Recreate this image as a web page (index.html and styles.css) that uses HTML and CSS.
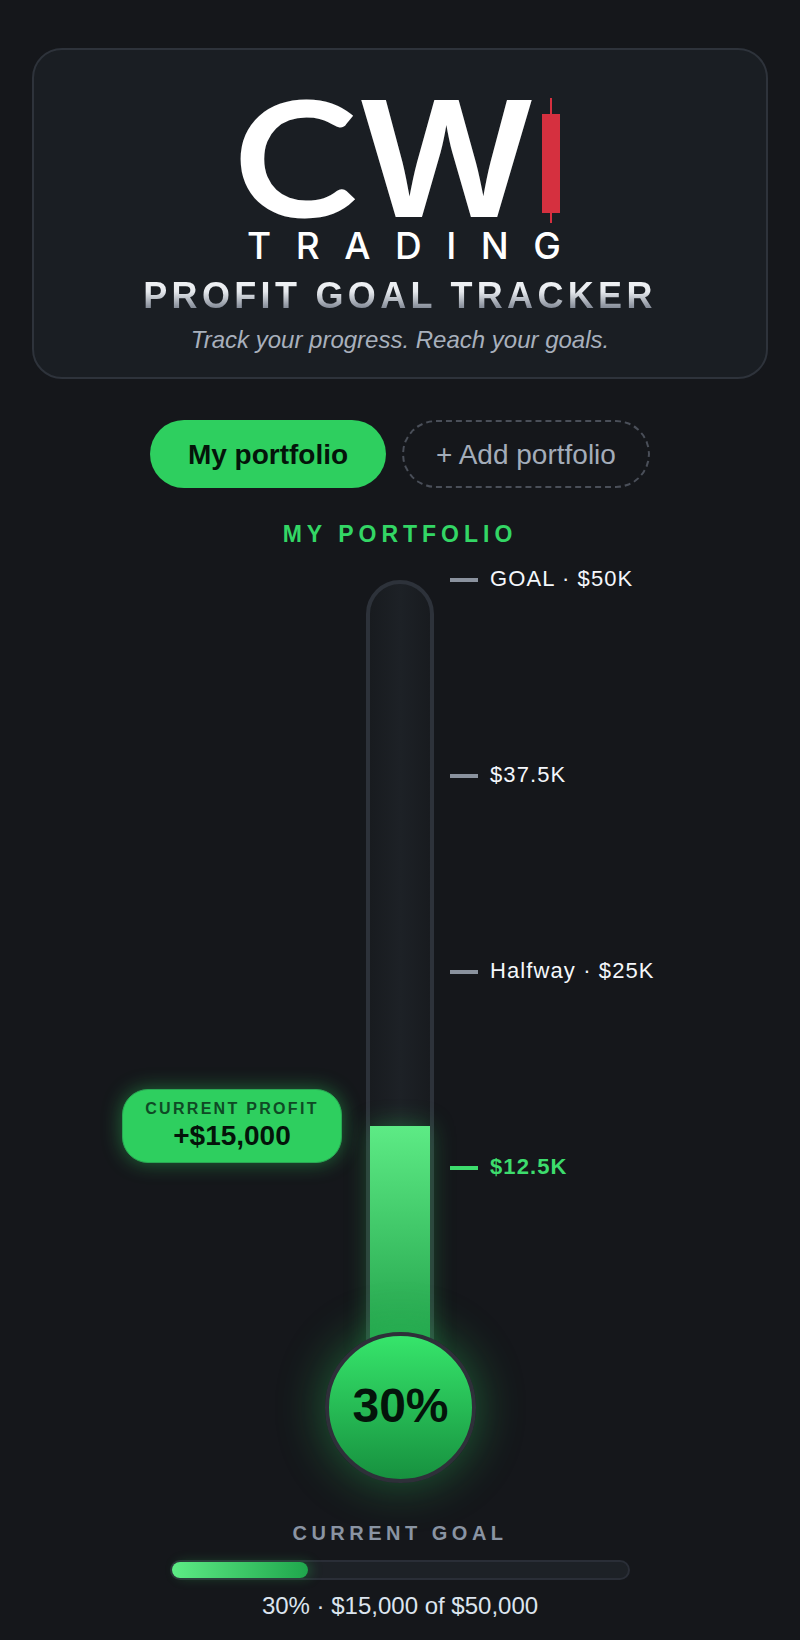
FILE: index.html
```html
<!DOCTYPE html>
<html lang="en">
<head>
<meta charset="utf-8">
<title>Profit Goal Tracker</title>
<link rel="stylesheet" href="styles.css">
</head>
<body>
<main class="page">
  <header class="card">
    <svg class="logo" viewBox="230 98 340 166" width="340" height="166" role="img" aria-label="CW Trading">
      <text class="logo-c" x="235" y="215" textLength="120" lengthAdjust="spacingAndGlyphs">C</text>
      <text class="logo-w" x="357" y="217" textLength="179" lengthAdjust="spacingAndGlyphs">W</text>
      <rect class="candle" x="550" y="98" width="2" height="125"/>
      <rect class="candle" x="542" y="114" width="18" height="99"/>
      <text class="logo-t" x="247" y="259" textLength="314">TRADING</text>
    </svg>
    <h1 class="title">PROFIT GOAL TRACKER</h1>
    <p class="subtitle">Track your progress. Reach your goals.</p>
  </header>

  <nav class="tabs">
    <button class="tab tab-active">My portfolio</button>
    <button class="tab tab-add">+ Add portfolio</button>
  </nav>

  <h2 class="portfolio-name">MY PORTFOLIO</h2>

  <section class="gauge">
    <div class="tube"><div class="tube-fill"></div></div>
    <ul class="scale">
      <li class="mark"><span class="tick"></span><span class="mark-text">GOAL · $50K</span></li>
      <li class="mark"><span class="tick"></span><span class="mark-text">$37.5K</span></li>
      <li class="mark"><span class="tick"></span><span class="mark-text">Halfway · $25K</span></li>
      <li class="mark mark-hit"><span class="tick"></span><span class="mark-text">$12.5K</span></li>
    </ul>
    <div class="pill">
      <div class="pill-label">CURRENT PROFIT</div>
      <div class="pill-value">+$15,000</div>
    </div>
    <div class="bulb">30%</div>
  </section>

  <section class="summary">
    <h3 class="summary-title">CURRENT GOAL</h3>
    <div class="bar"><div class="bar-fill"></div></div>
    <p class="summary-text">30% · $15,000 of $50,000</p>
  </section>
</main>
</body>
</html>
```

FILE: styles.css
```css
* { box-sizing: border-box; }
html, body { margin: 0; padding: 0; }
body {
  background: #15171b;
  font-family: "Liberation Sans", Arial, sans-serif;
  color: #fff;
}
.page { width: 800px; height: 1640px; overflow: hidden; padding-top: 48px; }

.card {
  margin: 0 32px;
  height: 331px;
  padding-top: 48px;
  border: 2px solid #2e333b;
  border-radius: 30px;
  background: #1a1e23;
  display: flex;
  flex-direction: column;
  align-items: center;
}
.logo { display: block; flex: none; overflow: visible; }
.logo-c { font-family: Lato, sans-serif; font-weight: 400; font-size: 155px; fill: #fff; stroke: #fff; stroke-width: 5px; }
.logo-w { font-family: Inter, sans-serif; font-weight: 600; font-size: 161px; fill: #fff; }
.logo-t { font-family: Inter, sans-serif; font-weight: 500; font-size: 37px; fill: #fff; }
.candle { fill: #d5303f; }
.title {
  margin: 10px 0 0;
  font-size: 36px;
  line-height: 44px;
  font-weight: 700;
  letter-spacing: 4.32px;
  background: linear-gradient(180deg, #eef0f3 22%, #e6e9ed 40%, #868d99 76%, #d4d8de 90%);
  -webkit-background-clip: text;
  background-clip: text;
  color: transparent;
}
.subtitle {
  margin: 6px 0 0;
  font-size: 24px;
  line-height: 32px;
  font-style: italic;
  color: #a8b0bc;
}

.tabs { display: flex; justify-content: center; gap: 16px; margin-top: 41px; }
.tab {
  height: 68px;
  border-radius: 34px;
  font-family: inherit;
  font-size: 28px;
  padding: 1px 0 0;
}
.tab-active { width: 236px; border: 0; background: #2ecf5f; color: #04140a; font-weight: 700; }
.tab-add { width: 248px; border: 2px dashed #4a4f59; background: transparent; color: #a3acb9; }

.portfolio-name {
  margin: 22px 0 22px;
  text-align: center;
  font-size: 23px;
  line-height: 48px;
  font-weight: 700;
  letter-spacing: 5px;
  color: #33d665;
}

.gauge {
  position: relative;
  height: 903px;
  display: grid;
  grid-template-columns: 1fr 68px 1fr;
  column-gap: 16px;
  align-items: start;
}
.tube {
  grid-column: 2;
  height: 780px;
  border: 4px solid #2d323a;
  border-radius: 34px 34px 0 0;
  background: linear-gradient(90deg, #181b1f, #1d2126 50%, #181b1f);
  display: flex;
  flex-direction: column;
  justify-content: flex-end;
}
.tube-fill {
  height: 230px;
  background: linear-gradient(180deg, #5deb85, #1f9d47);
  box-shadow: 0 0 24px rgba(46, 207, 95, .35);
}
.scale {
  grid-column: 3;
  list-style: none;
  margin: -14px 0 0;
  padding: 0;
  display: flex;
  flex-direction: column;
  gap: 168px;
}
.mark {
  height: 28px;
  display: flex;
  align-items: center;
  gap: 12px;
  font-size: 22px;
  line-height: 28px;
  letter-spacing: 1.1px;
  color: #f4f7fb;
}
.mark-text { margin-bottom: 2px; }
.tick { width: 28px; height: 4px; background: #8a929e; flex: none; }
.mark-hit { color: #3ddc6d; font-weight: 700; }
.mark-hit .tick { background: #3ddc6d; }

.pill {
  position: absolute;
  left: 122px;
  top: 509px;
  width: 220px;
  height: 74px;
  padding-top: 9px;
  border: 1px solid #2aa854;
  border-radius: 26px;
  background: #2ecf5f;
  box-shadow: 0 0 20px rgba(46, 207, 95, .45);
  text-align: center;
}
.pill-label { font-size: 16px; line-height: 20px; font-weight: 700; letter-spacing: 2.3px; color: #0f4a25; }
.pill-value { font-size: 28px; line-height: 33px; font-weight: 700; color: #04140a; }

.bulb {
  position: absolute;
  left: 325px;
  top: 752px;
  width: 151px;
  height: 151px;
  padding-bottom: 4px;
  border: 4px solid #2e3039;
  border-radius: 50%;
  background: linear-gradient(180deg, #36e56b, #17913f);
  box-shadow: 0 0 48px rgba(46, 207, 95, .4);
  display: flex;
  align-items: center;
  justify-content: center;
  font-size: 48px;
  font-weight: 700;
  color: #04140a;
}

.summary { margin-top: 38px; display: flex; flex-direction: column; align-items: center; }
.summary-title {
  margin: 0;
  font-size: 20px;
  line-height: 24px;
  font-weight: 700;
  letter-spacing: 4.5px;
  color: #8a94a3;
}
.bar {
  width: 460px;
  height: 20px;
  margin-top: 15px;
  border: 2px solid #2a2e37;
  border-radius: 10px;
  background: #1d2126;
}
.bar-fill {
  width: 136px;
  height: 100%;
  border-radius: 8px;
  background: linear-gradient(90deg, #5deb85, #1fa64c);
  box-shadow: 4px 0 12px rgba(46, 207, 95, .25);
}
.summary-text {
  margin: 11px 0 0;
  font-size: 24px;
  line-height: 30px;
  color: #dce4ee;
}
```
